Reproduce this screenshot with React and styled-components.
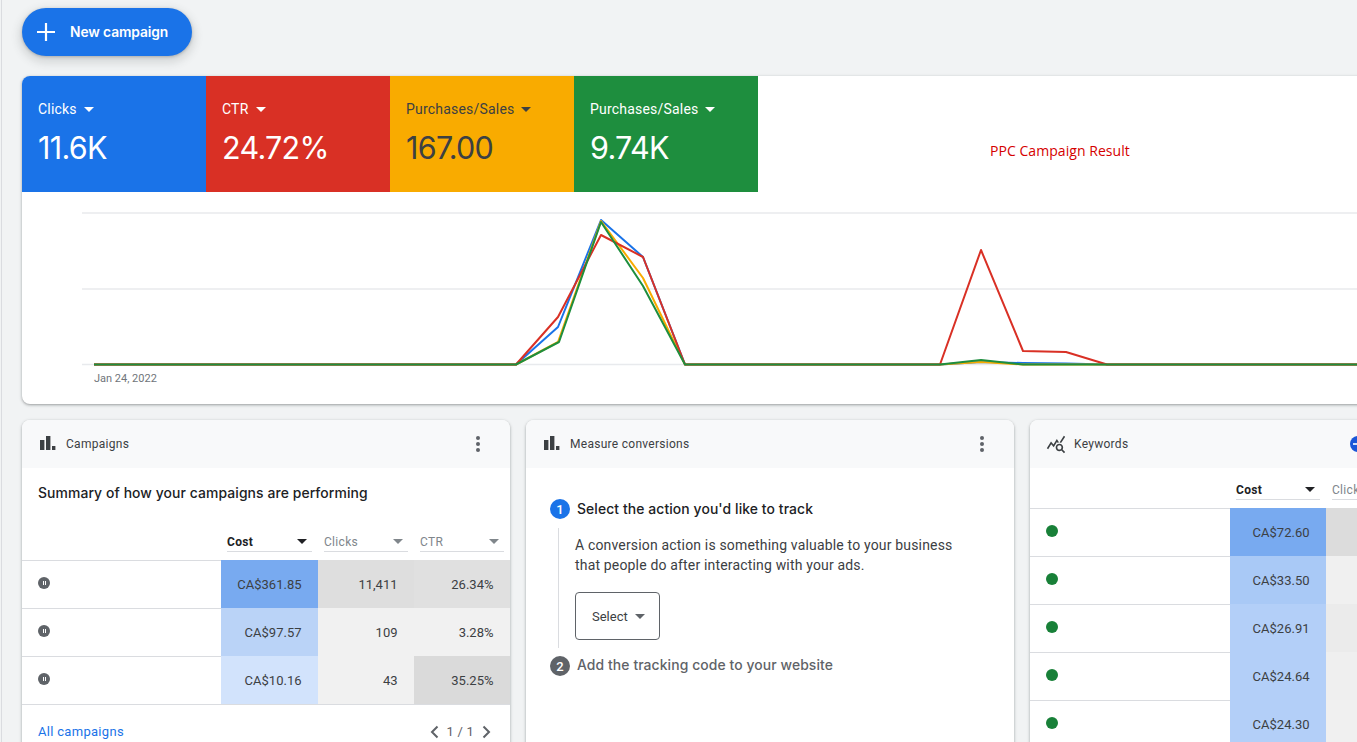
import React from "react";
import styled, { createGlobalStyle } from "styled-components";

const Global = createGlobalStyle`
  html, body { margin: 0; padding: 0; height: 742px; overflow: hidden; background: #f1f3f4; }
  body { font-family: Roboto, "Liberation Sans", sans-serif; color: #3c4043; }
  * { box-sizing: border-box; }
`;

const Page = styled.div`
  width: 1520px;
  height: 742px;
  margin-left: 1px;
  border-left: 1px solid #dadce0;
  padding: 8px 0 0 20px;
  overflow: hidden;
`;

const NewButton = styled.button`
  display: flex;
  align-items: center;
  gap: 12px;
  width: 170px;
  height: 48px;
  padding: 0 0 0 12px;
  border: 0;
  border-radius: 24px;
  background: #1a73e8;
  color: #fff;
  font: 600 13.8px Inter, Roboto, sans-serif;
  letter-spacing: -0.1px;
  box-shadow: 0 1px 3px rgba(60, 64, 67, 0.3), 0 4px 8px 3px rgba(60, 64, 67, 0.15);
`;

const ChartCard = styled.section`
  margin-top: 20px;
  width: 1480px;
  height: 328px;
  background: #fff;
  border-radius: 8px;
  box-shadow: 0 1px 2px rgba(60, 64, 67, 0.3), 0 1px 3px 1px rgba(60, 64, 67, 0.15);
  overflow: hidden;
`;

const TileRow = styled.div`
  display: flex;
  height: 116px;
`;

const Tile = styled.div`
  width: 184px;
  padding: 23px 16px 0;
  background: ${(p) => p.$bg};
  color: ${(p) => p.$fg};
`;

const TileLabel = styled.div`
  display: flex;
  align-items: center;
  gap: 7px;
  height: 20px;
  font-size: 14px;
  letter-spacing: 0.2px;
`;

const Caret = styled.span`
  display: inline-block;
  width: 0;
  height: 0;
  border-left: 5.5px solid transparent;
  border-right: 5.5px solid transparent;
  border-top: 5.5px solid ${(p) => p.$color || "currentColor"};
`;

const TileValue = styled.div`
  margin-top: 9px;
  font: 400 30.5px/40px Inter, Roboto, sans-serif;
  letter-spacing: -0.7px;
`;

const ChartTitle = styled.div`
  display: flex;
  align-items: center;
  height: 116px;
  padding: 32px 0 0 232px;
  font: 14px "Open Sans", sans-serif;
  letter-spacing: 0.05px;
  color: #d50000;
`;

const ChartSvg = styled.svg`
  display: block;
`;

const Cards = styled.div`
  display: flex;
  gap: 16px;
  margin-top: 16px;
`;

const Card = styled.section`
  flex: 0 0 488px;
  height: 400px;
  background: #fff;
  border-radius: 8px;
  box-shadow: 0 1px 2px rgba(60, 64, 67, 0.3), 0 1px 3px 1px rgba(60, 64, 67, 0.15);
  overflow: hidden;
`;

const CardHeader = styled.header`
  display: flex;
  align-items: center;
  height: 48px;
  padding: 0 30px 0 16px;
  background: #f8f9fa;
`;

const CardTitle = styled.h3`
  flex: 1;
  margin: 0 0 0 8px;
  font-size: 12px;
  font-weight: 400;
  letter-spacing: 0.28px;
  color: #3c4043;
`;

const Summary = styled.p`
  margin: 0;
  height: 52px;
  padding: 15px 16px 0;
  font: 500 13.9px/20px Inter, Roboto, sans-serif;
  letter-spacing: 0.1px;
  color: #202124;
`;

const Row = styled.div`
  display: grid;
  grid-template-columns: ${(p) => p.$cols};
  height: ${(p) => p.$h}px;
`;

const HeadSlot = styled.div`
  padding: 0 6px 8px;
  display: flex;
  align-items: flex-end;
`;

const Head = styled.div`
  flex: 1;
  display: flex;
  align-items: center;
  justify-content: space-between;
  height: 24px;
  padding: 4px 5px 0 0;
  border-bottom: 1px solid #dadce0;
  font-size: 12px;
  letter-spacing: 0.3px;
  font-weight: ${(p) => (p.$active ? 700 : 400)};
  color: ${(p) => (p.$active ? "#202124" : "#80868b")};
  white-space: nowrap;
  overflow: hidden;
`;

const NameCell = styled.div`
  display: flex;
  align-items: center;
  padding: 0 0 4px 16px;
  border-top: 1px solid #dadce0;
`;

const ValueCell = styled.div`
  display: flex;
  align-items: center;
  justify-content: flex-end;
  padding: 1px 16.5px 0 0;
  background: ${(p) => p.$bg};
  font-size: 13px;
  color: #3c4043;
`;

const PauseDot = styled.span`
  display: flex;
  align-items: center;
  justify-content: center;
  gap: 1px;
  width: 12px;
  height: 12px;
  border-radius: 50%;
  background: #5f6368;
  &::before, &::after {
    content: "";
    width: 1px;
    height: 4px;
    background: #fff;
  }
`;

const EnabledDot = styled.span`
  width: 12px;
  height: 12px;
  border-radius: 50%;
  background: #188038;
`;

const Footer = styled.footer`
  display: flex;
  align-items: center;
  justify-content: space-between;
  height: 54px;
  padding: 0 16px 0 16px;
  border-top: 1px solid #dadce0;
  font-size: 13px;
`;

const FootLink = styled.a`
  color: #1a73e8;
  letter-spacing: 0.3px;
`;

const Pager = styled.div`
  display: flex;
  align-items: center;
  gap: 4px;
  color: #5f6368;
  letter-spacing: 0.2px;
`;

const Steps = styled.div`
  padding: 31px 24px 0;
`;

const StepHead = styled.div`
  display: flex;
  align-items: center;
  gap: 7px;
  height: 20px;
  font: 500 13.9px Inter, Roboto, sans-serif;
  letter-spacing: 0.1px;
  color: ${(p) => (p.$active ? "#202124" : "#5f6368")};
`;

const StepNum = styled.span`
  display: flex;
  align-items: center;
  justify-content: center;
  width: 20px;
  height: 20px;
  border-radius: 50%;
  background: ${(p) => (p.$active ? "#1a73e8" : "#5f6368")};
  color: #fff;
  font: 500 13px Roboto, sans-serif;
`;

const StepLabel = styled.span`
  position: relative;
  top: ${(p) => (p.$active ? 0 : -1)}px;
`;

const StepBody = styled.div`
  margin: 9px 0 8px 8px;
  height: 120px;
  padding: 7px 0 0 16px;
  border-left: 1px solid #dadce0;
`;

const StepText = styled.p`
  margin: 0;
  font-size: 14px;
  line-height: 20px;
  letter-spacing: 0.17px;
  color: #3c4043;
  white-space: nowrap;
`;

const SelectBox = styled.div`
  display: flex;
  align-items: center;
  gap: 7px;
  width: 85px;
  height: 48px;
  margin-top: 17px;
  padding-left: 16px;
  border: 1px solid #5f6368;
  border-radius: 4px;
  font-size: 13px;
  color: #3c4043;
`;

const CornerBadge = styled.span`
  display: flex;
  align-items: center;
  justify-content: center;
  flex: none;
  width: 16px;
  height: 16px;
  margin-right: 118px;
  border-radius: 50%;
  background: #1a56d8;
  &::before {
    content: "";
    width: 10px;
    height: 2px;
    background: #cfe0fc;
  }
`;

const tiles = [
  { label: "Clicks", value: "11.6K", bg: "#1a73e8", fg: "#fff" },
  { label: "CTR", value: "24.72%", bg: "#d93025", fg: "#fff" },
  { label: "Purchases/Sales", value: "167.00", bg: "#f9ab00", fg: "#3c4043" },
  { label: "Purchases/Sales", value: "9.74K", bg: "#1e8e3e", fg: "#fff" },
];

const pre = (a) => `94,364.5 516,364.5 ${a} 685,364.5`;
const series = [
  { color: "#1a73e8", pts: `${pre("558,327 601,220 643,257")} 940,364.5 981,362 1023,363 1066,363.5 1107,364.5 1400,364.5` },
  { color: "#f9ab00", pts: `${pre("558,342 601,221 643,278")} 940,364.5 981,362 1023,364.5 1107,364.5 1400,364.5` },
  { color: "#d93025", pts: `${pre("558,317 601,235 643,257")} 940,364.5 981,250 1023,351 1066,352 1107,364.5 1400,364.5` },
  { color: "#1e8e3e", pts: `${pre("559,342 601,222 643,286")} 940,364.5 981,360 1023,364.5 1107,364.5 1400,364.5` },
];

const campaignRows = [
  { cost: ["CA$361.85", "#78aaf0"], clicks: ["11,411", "#dedede"], ctr: ["26.34%", "#e0e0e0"] },
  { cost: ["CA$97.57", "#bad3f7"], clicks: ["109", "#f1f1f1"], ctr: ["3.28%", "#f1f1f1"] },
  { cost: ["CA$10.16", "#d2e3fc"], clicks: ["43", "#f1f1f1"], ctr: ["35.25%", "#dadada"] },
];

const keywordRows = [
  { cost: ["CA$72.60", "#78aaf0"], clicks: ["", "#dcdcdc"] },
  { cost: ["CA$33.50", "#a9c9f6"], clicks: ["", "#f0f0f0"] },
  { cost: ["CA$26.91", "#b3cff8"], clicks: ["", "#ebebeb"] },
  { cost: ["CA$24.64", "#b3cff8"], clicks: ["", "#efefef"] },
  { cost: ["CA$24.30", "#b3cff8"], clicks: ["", "#f0f0f0"] },
];

const BarsIcon = () => (
  <svg width="20" height="20" viewBox="0 0 20 20" fill="#3c4043">
    <rect x="2" y="6" width="4.4" height="10" />
    <rect x="8" y="2" width="4.4" height="14" />
    <rect x="14" y="12" width="3.4" height="4" />
  </svg>
);

const KeywordIcon = () => (
  <svg width="20" height="20" viewBox="0 0 24 24" fill="#3c4043">
    <path d="M19.88 18.47c.44-.7.7-1.51.7-2.39 0-2.49-2.01-4.5-4.5-4.5s-4.5 2.01-4.5 4.5 2.01 4.5 4.49 4.5c.88 0 1.7-.26 2.39-.7L21.58 23 23 21.58l-3.12-3.11zm-3.8.11c-1.38 0-2.5-1.12-2.5-2.5s1.12-2.5 2.5-2.5 2.5 1.12 2.5 2.5-1.12 2.5-2.5 2.5zm-.36-8.5c-.74.02-1.45.18-2.1.45l-.55-.83-3.8 6.18-3.01-3.52-3.63 5.81L1 17l5-8 3 3.5L13 6l2.72 4.08zm2.59.5c-.64-.28-1.33-.45-2.05-.49L21.38 2 23 3.18l-4.69 7.4z" />
  </svg>
);

const MoreIcon = () => (
  <svg width="4" height="16" viewBox="0 0 4 16" fill="#5f6368">
    <circle cx="2" cy="2" r="2" />
    <circle cx="2" cy="8" r="2" />
    <circle cx="2" cy="14" r="2" />
  </svg>
);

const Chevron = ({ d }) => (
  <svg width="16" height="16" viewBox="0 0 16 16" fill="none" stroke="#5f6368" strokeWidth="2">
    <path d={d} />
  </svg>
);

const DataTable = ({ cols, heads, rows, dot: Dot, keys }) => (
  <>
    <Row $cols={cols} $h={40}>
      <div />
      {heads.map((h, i) => (
        <HeadSlot key={h}>
          <Head $active={i === 0}>
            {h}
            <Caret $color={i === 0 ? "#202124" : "#80868b"} />
          </Head>
        </HeadSlot>
      ))}
    </Row>
    {rows.map((r, i) => (
      <Row $cols={cols} $h={48} key={i}>
        <NameCell>
          <Dot />
        </NameCell>
        {keys.map((k) => (
          <ValueCell key={k} $bg={r[k][1]}>
            {r[k][0]}
          </ValueCell>
        ))}
      </Row>
    ))}
  </>
);

export default function App() {
  return (
    <Page>
      <Global />
      <NewButton>
        <svg width="24" height="24" viewBox="0 0 24 24" fill="none" stroke="#fff" strokeWidth="2.2">
          <path d="M12 3v18M3 12h18" />
        </svg>
        New campaign
      </NewButton>

      <ChartCard>
        <TileRow>
          {tiles.map((t, i) => (
            <Tile key={i} $bg={t.bg} $fg={t.fg}>
              <TileLabel>
                {t.label}
                <Caret />
              </TileLabel>
              <TileValue>{t.value}</TileValue>
            </Tile>
          ))}
          <ChartTitle>PPC Campaign Result</ChartTitle>
        </TileRow>
        <ChartSvg width="1480" height="212" viewBox="22 192 1480 212">
          <g stroke="#e8eaed" strokeWidth="1.4">
            <line x1="82" x2="1500" y1="213" y2="213" />
            <line x1="82" x2="1500" y1="289" y2="289" />
            <line x1="82" x2="1500" y1="364.5" y2="364.5" />
          </g>
          {series.map((s) => (
            <polyline key={s.color} points={s.pts} fill="none" stroke={s.color} strokeWidth="2" strokeLinejoin="round" />
          ))}
          <text x="94" y="382" fontSize="11" fill="#70757a" fontFamily="Roboto, sans-serif">Jan 24, 2022</text>
        </ChartSvg>
      </ChartCard>

      <Cards>
        <Card>
          <CardHeader>
            <BarsIcon />
            <CardTitle>Campaigns</CardTitle>
            <MoreIcon />
          </CardHeader>
          <Summary>Summary of how your campaigns are performing</Summary>
          <DataTable
            cols="199px 97px 96px 96px"
            heads={["Cost", "Clicks", "CTR"]}
            rows={campaignRows}
            dot={PauseDot}
            keys={["cost", "clicks", "ctr"]}
          />
          <Footer>
            <FootLink>All campaigns</FootLink>
            <Pager>
              <Chevron d="M10.5 2.5 5 8l5.5 5.5" />
              <span>1 / 1</span>
              <Chevron d="M5.5 2.5 11 8l-5.5 5.5" />
            </Pager>
          </Footer>
        </Card>

        <Card>
          <CardHeader>
            <BarsIcon />
            <CardTitle>Measure conversions</CardTitle>
            <MoreIcon />
          </CardHeader>
          <Steps>
            <StepHead $active>
              <StepNum $active>1</StepNum>
              <StepLabel $active>Select the action you'd like to track</StepLabel>
            </StepHead>
            <StepBody>
              <StepText>
                A conversion action is something valuable to your business
                <br />
                that people do after interacting with your ads.
              </StepText>
              <SelectBox>
                Select
                <Caret $color="#5f6368" />
              </SelectBox>
            </StepBody>
            <StepHead>
              <StepNum>2</StepNum>
              <StepLabel>Add the tracking code to your website</StepLabel>
            </StepHead>
          </Steps>
        </Card>

        <Card>
          <CardHeader>
            <KeywordIcon />
            <CardTitle>Keywords</CardTitle>
            <CornerBadge />
            <MoreIcon />
          </CardHeader>
          <DataTable
            cols="200px 96px 96px 96px"
            heads={["Cost", "Clicks", "CTR"]}
            rows={keywordRows}
            dot={EnabledDot}
            keys={["cost", "clicks"]}
          />
        </Card>
      </Cards>
    </Page>
  );
}
